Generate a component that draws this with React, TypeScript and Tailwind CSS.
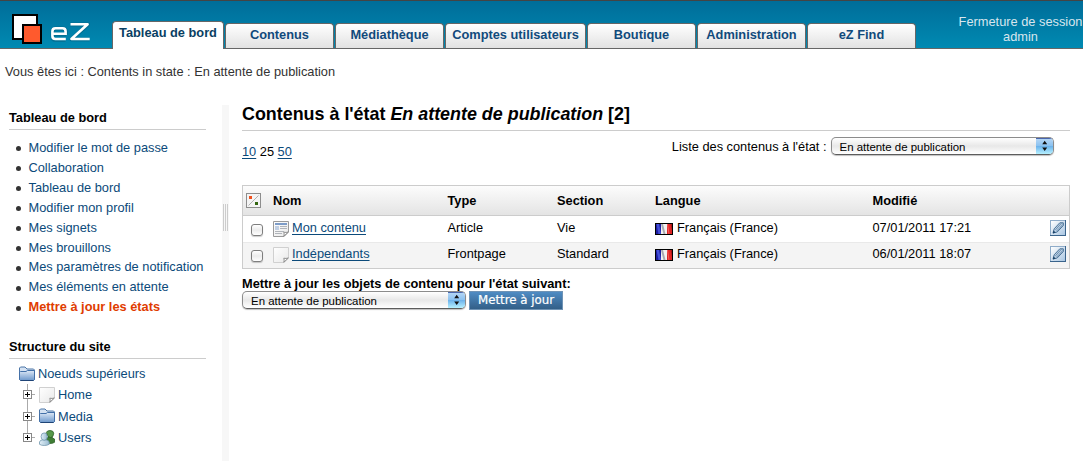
import type { ReactNode } from "react";

const tabs = [
  { label: "Contenus", width: "w-[109px]" },
  { label: "Médiathèque", width: "w-[109px]" },
  { label: "Comptes utilisateurs", width: "w-[141px]" },
  { label: "Boutique", width: "w-[109px]" },
  { label: "Administration", width: "w-[109px]" },
  { label: "eZ Find", width: "w-[109px]" },
];

const dashboardLinks = [
  "Modifier le mot de passe",
  "Collaboration",
  "Tableau de bord",
  "Modifier mon profil",
  "Mes signets",
  "Mes brouillons",
  "Mes paramètres de notification",
  "Mes éléments en attente",
];

function Logo() {
  return (
    <svg width="80" height="32" viewBox="0 0 80 32" className="block">
      <rect x="1" y="1" width="24" height="24" fill="#fff" stroke="#000" strokeWidth="2" />
      <rect x="11" y="11" width="18" height="18" fill="#ff5a2d" stroke="#000" strokeWidth="2" />
      <g fill="none" stroke="#0b4f6b" strokeOpacity=".35" strokeWidth="4">
        <path d="M54 20.5H40.5M54 20.5V18Q54 14.5 50.5 14.5H44Q40.5 14.5 40.5 18V22.5Q40.5 26 44 26H53.5" />
        <path d="M58.5 10.5H76L59.5 25.5H77.5" strokeLinejoin="round" />
      </g>
      <g fill="none" stroke="#fff" strokeWidth="2.6">
        <path d="M53.6 19.8H40.4M53.6 21V17.4Q53.6 14.3 50.5 14.3H43.5Q40.4 14.3 40.4 17.4V21.9Q40.4 25 43.5 25H53.8" />
        <path d="M58.5 10.3H75.6L59.4 25H77.7" strokeLinejoin="round" />
      </g>
    </svg>
  );
}

function FolderIcon() {
  return (
    <svg width="16" height="16" viewBox="0 0 16 16" className="block shrink-0">
      <defs>
        <linearGradient id="folder" x1="0" y1="0" x2="0" y2="1">
          <stop offset="0" stopColor="#dde8f6" />
          <stop offset="1" stopColor="#6c97cb" />
        </linearGradient>
      </defs>
      <path d="M.5 13.5V2L1.5 1H6L8 3H14.5L15.5 4V13.5Z" fill="#d5e2f2" stroke="#4a74a6" />
      <path d="M.5 6L1.5 5.5H7L8.5 4.5H15.5V13.5L14.5 14.5H1.5L.5 13.5Z" fill="url(#folder)" stroke="#4370a8" />
      <path d="M1.5 14.5H14.5" stroke="#1f4476" />
    </svg>
  );
}

function PageIcon({ article = false }: { article?: boolean }) {
  return (
    <svg width="16" height="16" viewBox="0 0 16 16" className="block shrink-0">
      <defs>
        <linearGradient id="paper" x1="0" y1="0" x2="1" y2="1">
          <stop offset="0" stopColor="#fff" />
          <stop offset="1" stopColor="#e8e8e8" />
        </linearGradient>
      </defs>
      <path
        d="M.5 .5H15.5V11L11 15.5H.5Z"
        fill="url(#paper)"
        stroke={article ? "#9a9a9a" : "#d0d0d0"}
      />
      {article && (
        <g shapeRendering="crispEdges">
          <rect x="2" y="2" width="12" height="2" fill="#7d9cc8" />
          <rect x="2" y="5" width="4" height="4" fill="#c0cfe4" />
          <path d="M7 5.5H14M7 7.5H14M2 10.5H11M2 12.5H9" stroke="#b0b4ba" />
        </g>
      )}
      <path d="M15.3 11L10.8 15.3Q11.6 13 10.8 11.2Q13 11.8 15.3 11Z" fill="#fff" stroke="#858585" strokeWidth=".9" />
    </svg>
  );
}

function UsersIcon() {
  return (
    <svg width="16" height="16" viewBox="0 0 16 16" className="block shrink-0">
      <defs>
        <linearGradient id="person">
          <stop offset="0" stopColor="#e2eff7" />
          <stop offset="1" stopColor="#9bbdd2" />
        </linearGradient>
      </defs>
      <path d="M6.5 13.3V9Q9 8.2 9 7H13Q13 8.2 15.5 9V12.3Q14 13.5 10.5 13.5Z" fill="#3f7d35" stroke="#2c5f26" strokeWidth=".8" />
      <path d="M7.3 2.5Q8 .5 11 .5Q14.5 .5 14.7 3.3Q14.5 7.4 11.5 7.6Q8.5 7.4 7.3 2.5Z" fill="#57984a" stroke="#2c5f26" strokeWidth=".8" />
      <path d="M.5 14.3V12Q.8 10.3 3.5 9.8H7Q9.8 10.3 10.2 12V14.3Q8 15.5 5.3 15.5Q2.3 15.5 .5 14.3Z" fill="url(#person)" stroke="#7095ad" strokeWidth=".8" />
      <ellipse cx="5.2" cy="6.6" rx="3.1" ry="3.7" fill="url(#person)" stroke="#7095ad" strokeWidth=".8" />
    </svg>
  );
}

function FlagIcon() {
  return (
    <svg width="18" height="12" viewBox="0 0 18 12" className="block shrink-0">
      <rect width="18" height="12" fill="#000" />
      <rect x="1" y="1" width="6" height="10" fill="#1c1ca0" />
      <path d="M1.5 1H4L6 11H3.5Z" fill="#4450d8" />
      <rect x="6" y="1" width="6" height="10" fill="#f2f2f2" />
      <path d="M6 1H8L10.5 11H8.5Z" fill="#a9a9b0" />
      <rect x="12" y="1" width="5" height="10" fill="#e02424" />
      <path d="M12 1H13L14.5 11H13.5Z" fill="#f46060" />
      <path d="M15.5 1H17V8Z" fill="#a51414" />
    </svg>
  );
}

function EditIcon() {
  return (
    <svg width="16" height="16" viewBox="0 0 16 16" className="block">
      <defs>
        <linearGradient id="edit" x1="0" y1="0" x2="1" y2="1">
          <stop offset="0" stopColor="#fff" />
          <stop offset="1" stopColor="#a9c6e2" />
        </linearGradient>
      </defs>
      <path d="M0 0H16V16H0Z" fill="#8facc9" />
      <path d="M16 0V16H0V15H15V0Z" fill="#3a648c" />
      <path d="M1 1H15V15H1Z" fill="url(#edit)" />
      <path d="M3 13L4.2 8.8L9.8 2.8H13.3V5.5L7.2 12Z" fill="#b9cfe3" stroke="#3a648c" strokeWidth=".9" />
      <path d="M5.4 9.8L11.5 3.2M6.6 11L12.8 4.5" stroke="#5a7fa3" strokeWidth=".8" fill="none" />
      <path d="M2.8 13.4L3.6 10.6L5.6 12.5Z" fill="#173f66" />
    </svg>
  );
}

function InvertIcon() {
  return (
    <svg width="15" height="15" viewBox="0 0 15 15" className="block">
      <rect x=".5" y=".5" width="14" height="14" fill="#f4f4f4" stroke="#8d8d8d" />
      <path d="M2.5 12.5L12.5 2.5" stroke="#b0b0b0" />
      <rect x="3" y="3" width="3" height="3" fill="#f0501e" />
      <rect x="9" y="9" width="3" height="3" fill="#336610" />
    </svg>
  );
}

function Checkbox() {
  return (
    <span className="block h-3 w-3 rounded-[3px] border border-[#7e7e7e] bg-gradient-to-b from-white via-[#ececec] to-white shadow-[0_1px_1px_rgba(0,0,0,0.2)]" />
  );
}

function StateSelect() {
  return (
    <div className="flex h-[18px] w-[223.5px] overflow-hidden rounded-[5px] border border-[#8c8c8c] border-b-[#5c5c5c] bg-gradient-to-b from-white via-[#e8e8e8] to-white shadow-[0_1px_1px_rgba(0,0,0,0.25)]">
      <span className="flex-1 pl-2 text-[11.45px] leading-[18px]">En attente de publication</span>
      <svg width="18" height="16" viewBox="0 0 18 16" className="-mr-px block">
        <defs>
          <linearGradient id="aqua" x1="0" y1="0" x2="0" y2="1">
            <stop offset="0" stopColor="#b9d8f5" />
            <stop offset=".48" stopColor="#8cc2f0" />
            <stop offset=".52" stopColor="#6db3ec" />
            <stop offset="1" stopColor="#b6f1ff" />
          </linearGradient>
        </defs>
        <rect width="18" height="16" fill="url(#aqua)" />
        <path d="M0 .5H18" stroke="#4a66ae" />
        <path d="M6.2 6.3L8.7 2.8L11.2 6.3ZM6.2 9.5L8.7 13L11.2 9.5Z" fill="#111" />
      </svg>
    </div>
  );
}

function TreeNode({ icon, label, last = false }: { icon: ReactNode; label: string; last?: boolean }) {
  return (
    <li className="flex h-[21.5px] items-center">
      <svg width="16" height="21.5" viewBox="0 0 16 21.5" className="mr-px block shrink-0" shapeRendering="crispEdges">
        <path d={last ? "M5.5 0V10M5 10.5H13" : "M5.5 0V22M5 10.5H13"} stroke="#aaa" />
        <rect x="1.5" y="6.5" width="8" height="8" fill="#fff" stroke="#888" />
        <path d="M3 10.5H8M5.5 8V13" stroke="#000" />
      </svg>
      {icon}
      <a className="pl-[3px] text-[#0b4a7a]">{label}</a>
    </li>
  );
}

function ContentRow({
  name,
  type,
  section,
  modified,
  icon,
  shaded = false,
}: {
  name: string;
  type: string;
  section: string;
  modified: string;
  icon: ReactNode;
  shaded?: boolean;
}) {
  return (
    <div
      className={
        shaded
          ? "grid h-[26px] grid-cols-[30px_174px_110px_98px_218px_1fr_19px] bg-[#f4f4f4] shadow-[inset_0_1px_0_#e9e9e9]"
          : "grid h-[26px] grid-cols-[30px_174px_110px_98px_218px_1fr_19px]"
      }
    >
      <span className="pt-2 pl-2">
        <Checkbox />
      </span>
      <span className="flex pt-[5px]">
        {icon}
        <a className="-mt-[3px] ml-[3px] leading-[20px] text-[#0b4a7a] underline underline-offset-2">{name}</a>
      </span>
      <span className="pt-0.5 pl-[0.5px] leading-[20px]">{type}</span>
      <span className="pt-0.5 leading-[20px]">{section}</span>
      <span className="flex pt-[7px]">
        <FlagIcon />
        <span className="-mt-[5px] ml-1 leading-[20px]">Français (France)</span>
      </span>
      <span className="-ml-[0.5px] pt-0.5 leading-[20px]">{modified}</span>
      <span className="pt-1">
        <EditIcon />
      </span>
    </div>
  );
}

export default function App() {
  return (
    <div className="flex h-[467px] w-[1083px] flex-col overflow-hidden bg-white font-['Liberation_Sans',Arial,sans-serif] text-[12.8px] text-black">
      <header className="flex h-[49px] shrink-0 border-t border-b border-t-[#444] border-b-[#666] bg-gradient-to-b from-[#006d99] to-[#008ab2]">
        <div className="w-[112px] pt-[13px] pl-3">
          <Logo />
        </div>
        <nav className="flex items-end gap-px font-bold">
          <a className="-mb-px h-[28px] w-[112px] rounded-t-[4px] border border-b-0 border-[#666] bg-white text-center leading-[22px] text-[#0a3f63]">
            Tableau de bord
          </a>
          {tabs.map((tab) => (
            <a
              key={tab.label}
              className={`${tab.width} h-[25px] rounded-t-[4px] border border-b-0 border-[#666] bg-gradient-to-b from-white to-[#e2e2e2] text-center leading-[22px] whitespace-nowrap text-[#114a7c]`}
            >
              {tab.label}
            </a>
          ))}
        </nav>
        <div className="ml-auto w-[125px] pt-[13px] text-center leading-[15px] whitespace-nowrap text-[#d8e6ee]">
          <div>Fermeture de session</div>
          <div>admin</div>
        </div>
      </header>

      <div className="h-[56px] shrink-0 pt-[13px] pl-[5px] leading-[20px] text-[#333]">
        Vous êtes ici : Contents in state : En attente de publication
      </div>

      <div className="flex h-[356px]">
        <aside className="w-[222px] pr-4 pl-[9px]">
          <h2 className="h-[25px] border-b border-[#ccc] pt-[3px] leading-[20px] font-bold">Tableau de bord</h2>
          <ul className="mt-2 leading-[19.9px] text-[#333]">
            {dashboardLinks.map((label) => (
              <li key={label} className="flex items-center whitespace-nowrap">
                <span className="mt-[2px] mr-2 ml-[6.5px] h-[5px] w-[5px] shrink-0 rounded-full bg-[#333]" />
                <a className="text-[#0b4a7a]">{label}</a>
              </li>
            ))}
            <li className="flex items-center font-bold whitespace-nowrap">
              <span className="mt-[2px] mr-2 ml-[6.5px] h-[5px] w-[5px] shrink-0 rounded-full bg-[#333]" />
              <a className="text-[#e03c00]">Mettre à jour les états</a>
            </li>
          </ul>
          <h2 className="mt-[17px] h-[25px] border-b border-[#ccc] pt-[3px] leading-[20px] font-bold">Structure du site</h2>
          <div className="mt-1 flex h-[21px] items-center pl-[10px]">
            <FolderIcon />
            <a className="pl-[3px] text-[#0b4a7a]">Noeuds supérieurs</a>
          </div>
          <ul className="pl-[13px]">
            <TreeNode icon={<PageIcon />} label="Home" />
            <TreeNode icon={<FolderIcon />} label="Media" />
            <TreeNode icon={<UsersIcon />} label="Users" last />
          </ul>
        </aside>

        <div className="w-[7px] bg-[#f7f7f7] pt-[99px] pl-px">
          <div className="flex h-[27px] gap-px">
            <span className="w-px bg-[#ccc]" />
            <span className="w-px bg-[#ccc]" />
            <span className="w-px bg-[#ccc]" />
          </div>
        </div>

        <main className="ml-[13px] w-[828px]">
          <h1 className="h-[26px] border-b border-[#ccc] text-[17.9px] leading-[18px] font-bold">
            Contenus à l'état <i>En attente de publication</i> [2]
          </h1>
          <div className="flex h-[54px] justify-between">
            <div className="pt-[11px] leading-[20px]">
              <a className="text-[#0b4a7a] underline underline-offset-2">10</a> 25{" "}
              <a className="text-[#0b4a7a] underline underline-offset-2">50</a>
            </div>
            <div className="flex gap-1 pt-[6px] pr-4 leading-[20px]">
              <span>Liste des contenus à l'état :</span>
              <StateSelect />
            </div>
          </div>

          <div className="border border-[#ccc]">
            <div className="grid h-[30px] grid-cols-[30px_174px_110px_98px_218px_1fr] border-b border-[#ccc] bg-gradient-to-b from-[#fcfcfc] to-[#e4e4e4] leading-[30px] font-bold">
              <span className="pt-[7px] pl-[3px]">
                <InvertIcon />
              </span>
              <span>Nom</span>
              <span className="pl-[0.5px]">Type</span>
              <span>Section</span>
              <span>Langue</span>
              <span className="-ml-[0.5px]">Modifié</span>
            </div>
            <ContentRow name="Mon contenu" type="Article" section="Vie" modified="07/01/2011 17:21" icon={<PageIcon article />} />
            <ContentRow name="Indépendants" type="Frontpage" section="Standard" modified="06/01/2011 18:07" icon={<PageIcon />} shaded />
          </div>

          <div className="pt-1.5 leading-[17px] font-bold">Mettre à jour les objets de contenu pour l'état suivant:</div>
          <div className="-mt-px flex gap-[3.5px]">
            <StateSelect />
            <button className="h-[19px] w-[94px] border border-[#6f93b5] bg-gradient-to-b from-[#4f8cc4] to-[#335f88] font-['DejaVu_Sans',sans-serif] text-[11.8px] leading-[17px] whitespace-nowrap text-white [-webkit-text-stroke:0.2px_white]">
              Mettre à jour
            </button>
          </div>
        </main>
      </div>
    </div>
  );
}
